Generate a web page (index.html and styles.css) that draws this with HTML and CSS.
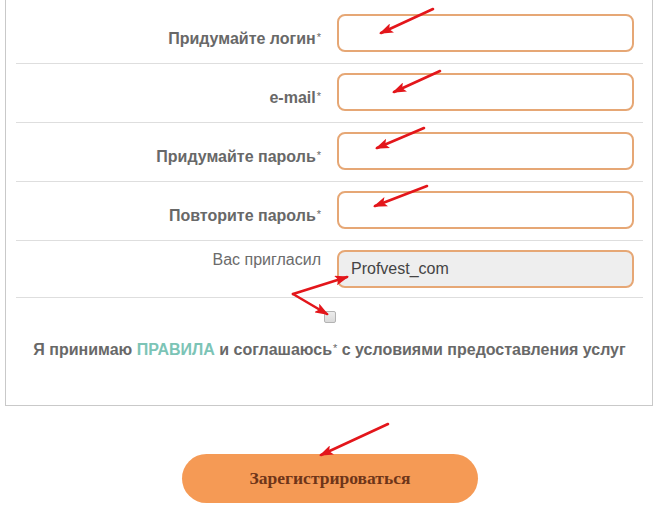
FILE: index.html
```html
<!DOCTYPE html>
<html lang="ru">
<head>
<meta charset="utf-8">
<title>Регистрация</title>
<link rel="stylesheet" href="styles.css">
</head>
<body>
<div class="page">
  <form class="card">
    <div class="row">
      <label class="label">Придумайте логин<span class="star">*</span></label>
      <div class="field"></div>
    </div>
    <div class="row">
      <label class="label">e-mail<span class="star">*</span></label>
      <div class="field"></div>
    </div>
    <div class="row">
      <label class="label">Придумайте пароль<span class="star">*</span></label>
      <div class="field"></div>
    </div>
    <div class="row">
      <label class="label">Повторите пароль<span class="star">*</span></label>
      <div class="field"></div>
    </div>
    <div class="row row-last">
      <label class="label label-plain">Вас пригласил</label>
      <div class="field field-filled">Profvest_com</div>
    </div>
    <div class="agree">
      <span class="check"></span>
      <p class="agree-text">Я принимаю <span class="rules">ПРАВИЛА</span> и соглашаюсь<span class="star">*</span> с условиями предоставления услуг</p>
    </div>
  </form>
  <div class="actions">
    <button type="button" class="submit">Зарегистрироваться</button>
  </div>

  <svg class="arrows" width="660" height="511" viewBox="0 0 660 511">
    <defs>
      <marker id="ah" markerWidth="14" markerHeight="10" refX="12" refY="5" orient="auto" markerUnits="userSpaceOnUse">
        <path d="M0 0 L14 5 L0 10 L3 5 Z" fill="#e3161b"/>
      </marker>
    </defs>
    <g stroke="#e3161b" stroke-width="2.6" stroke-linecap="round" fill="none">
      <line x1="433" y1="9" x2="381" y2="33" marker-end="url(#ah)"/>
      <line x1="440" y1="71" x2="394" y2="92" marker-end="url(#ah)"/>
      <line x1="424" y1="128" x2="377" y2="148" marker-end="url(#ah)"/>
      <line x1="427" y1="186" x2="375" y2="206" marker-end="url(#ah)"/>
      <line x1="293" y1="294" x2="347" y2="277" marker-end="url(#ah)"/>
      <line x1="293" y1="294" x2="327" y2="314" marker-end="url(#ah)"/>
      <line x1="388" y1="424" x2="321" y2="455" marker-end="url(#ah)"/>
    </g>
  </svg>
</div>
</body>
</html>
```

FILE: styles.css
```css
* { box-sizing: border-box; }

html, body {
  margin: 0;
  padding: 0;
  background: #ffffff;
}

body {
  font-family: "Liberation Sans", Arial, sans-serif;
  color: #666666;
}

.page {
  position: relative;
  width: 660px;
  height: 511px;
  overflow: hidden;
}

.card {
  margin: 0 0 0 5px;
  width: 648px;
  border: 1px solid #c9c9c9;
  border-top: none;
  padding: 5px 9px 46px 10px;
  background: #fff;
}

.row {
  display: grid;
  grid-template-columns: 305px 297px;
  column-gap: 16px;
  padding: 9px 0 11px 0;
  border-bottom: 1px solid #dedede;
}

.row-last {
  padding-bottom: 9px;
}

.label {
  text-align: right;
  font-size: 16px;
  line-height: 18px;
  font-weight: bold;
  color: #686868;
  padding-top: 16px;
}

.label-plain {
  font-weight: normal;
  padding-top: 1px;
  color: #6b6b6b;
}

.star {
  font-size: 11px;
  font-weight: normal;
  vertical-align: top;
  position: relative;
  top: -2px;
  margin-left: 1px;
}

.field {
  height: 38px;
  border: 2px solid #e6a775;
  border-radius: 8px;
  background: #fff;
}

.field-filled {
  background: #eeeeee;
  font-size: 16px;
  line-height: 34px;
  padding-left: 12px;
  color: #444444;
  font-weight: normal;
}

.agree {
  display: flex;
  flex-direction: column;
  align-items: center;
  padding-top: 13px;
}

.check {
  width: 12px;
  height: 12px;
  border: 1px solid #b3b3b3;
  border-radius: 2px;
  background: linear-gradient(#ececec, #dadada);
}

.agree-text {
  margin: 18px 0 0 0;
  font-size: 16px;
  line-height: 18px;
  font-weight: bold;
  color: #686868;
  text-align: center;
  white-space: nowrap;
}

.rules {
  color: #7cc4b6;
}

.actions {
  display: flex;
  justify-content: center;
  padding-top: 48px;
}

.submit {
  width: 296px;
  height: 49px;
  border: none;
  border-radius: 25px;
  background: #f59a55;
  font-family: "Liberation Serif", "Times New Roman", serif;
  font-weight: bold;
  font-size: 17.5px;
  color: #6e3519;
  padding: 0;
}

.arrows {
  position: absolute;
  left: 0;
  top: 0;
  pointer-events: none;
}
```
